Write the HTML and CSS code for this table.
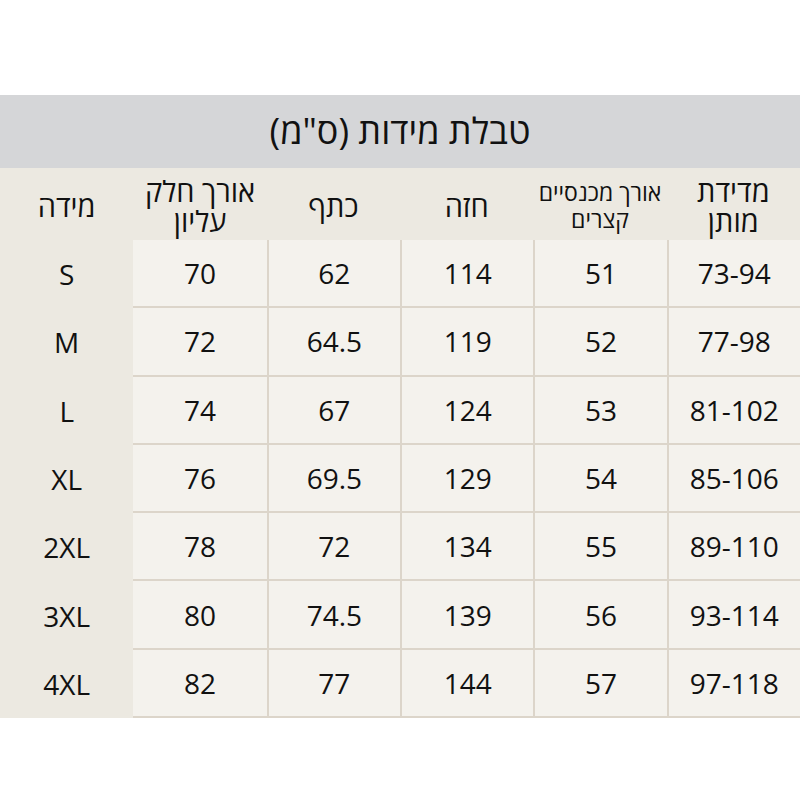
FILE: index.html
```html
<!DOCTYPE html>
<html lang="he" dir="rtl">
<head>
<meta charset="utf-8">
<title>טבלת מידות</title>
<link rel="stylesheet" href="styles.css">
</head>
<body>
<div class="page">
  <div class="title">טבלת מידות (ס"מ)</div>
  <div class="grid">
    <div class="head">מדידת<br>מותן</div>
    <div class="head small">אורך מכנסיים<br>קצרים</div>
    <div class="head">חזה</div>
    <div class="head">כתף</div>
    <div class="head">אורך חלק<br>עליון</div>
    <div class="head">מידה</div>

    <div class="cell line">73-94</div><div class="cell line">51</div><div class="cell line">114</div><div class="cell line">62</div><div class="cell">70</div><div class="size">S</div>
    <div class="cell line">77-98</div><div class="cell line">52</div><div class="cell line">119</div><div class="cell line">64.5</div><div class="cell">72</div><div class="size">M</div>
    <div class="cell line">81-102</div><div class="cell line">53</div><div class="cell line">124</div><div class="cell line">67</div><div class="cell">74</div><div class="size">L</div>
    <div class="cell line">85-106</div><div class="cell line">54</div><div class="cell line">129</div><div class="cell line">69.5</div><div class="cell">76</div><div class="size">XL</div>
    <div class="cell line">89-110</div><div class="cell line">55</div><div class="cell line">134</div><div class="cell line">72</div><div class="cell">78</div><div class="size">2XL</div>
    <div class="cell line">93-114</div><div class="cell line">56</div><div class="cell line">139</div><div class="cell line">74.5</div><div class="cell">80</div><div class="size">3XL</div>
    <div class="cell line">97-118</div><div class="cell line">57</div><div class="cell line">144</div><div class="cell line">77</div><div class="cell">82</div><div class="size">4XL</div>
  </div>
</div>
</body>
</html>
```

FILE: styles.css
```css
html, body {
  margin: 0;
  padding: 0;
  background: #ffffff;
}
body {
  font-family: "Open Sans", "DejaVu Sans", sans-serif;
  color: #111111;
}
.page {
  padding-top: 95px;
}
.title {
  height: 73px;
  background: #d5d6d8;
  display: flex;
  align-items: center;
  justify-content: center;
  font-size: 36px;
  line-height: 1;
  padding-bottom: 2px;
  box-sizing: border-box;
}
.grid {
  display: grid;
  grid-template-columns: repeat(6, 1fr);
  grid-template-rows: 72px repeat(7, 68.3px);
  background: #ece9e1;
}
.head {
  display: flex;
  align-items: center;
  justify-content: center;
  text-align: center;
  font-size: 29px;
  line-height: 30px;
  padding-top: 4px;
}
.head.small {
  font-size: 23px;
  line-height: 27px;
}
.cell, .size {
  display: flex;
  align-items: center;
  justify-content: center;
  font-size: 28px;
  box-sizing: border-box;
}
.cell {
  background: #f4f2ed;
  border-bottom: 2px solid #dcd5ca;
}
.cell.line {
  border-left: 2px solid #dcd5ca;
}
.size {
  background: #ece9e1;
}
```
